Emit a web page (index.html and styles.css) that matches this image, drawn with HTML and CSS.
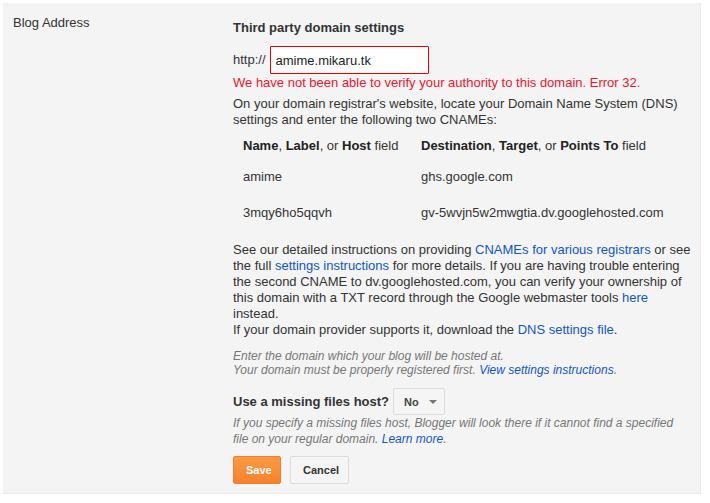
FILE: index.html
```html
<!DOCTYPE html>
<html lang="en">
<head>
  <meta charset="UTF-8" />
  <title>Blog Address</title>
  <link rel="stylesheet" href="styles.css">
</head>
<body>
  <div class="panel">
    <div class="label">Blog Address</div>

    <div class="settings">
      <h3>Third party domain settings</h3>

      <div class="domain-row">
        <span class="prefix">http://</span>
        <input class="domain-input" type="text" value="amime.mikaru.tk" />
      </div>
      <div class="error">We have not been able to verify your authority to this domain. Error 32.</div>

      <p class="text">On your domain registrar's website, locate your Domain Name System (DNS) settings and enter the following two CNAMEs:</p>

      <table class="cnames">
        <tr>
          <th><b>Name</b>, <b>Label</b>, or <b>Host</b> field</th>
          <th><b>Destination</b>, <b>Target</b>, or <b>Points To</b> field</th>
        </tr>
        <tr>
          <td>amime</td>
          <td>ghs.google.com</td>
        </tr>
        <tr>
          <td>3mqy6ho5qqvh</td>
          <td>gv-5wvjn5w2mwgtia.dv.googlehosted.com</td>
        </tr>
      </table>

      <p class="text">See our detailed instructions on providing <a href="#">CNAMEs for various registrars</a> or see the full <a href="#">settings instructions</a> for more details. If you are having trouble entering the second CNAME to dv.googlehosted.com, you can verify your ownership of this domain with a TXT record through the Google webmaster tools <a href="#">here</a> instead.<br />If your domain provider supports it, download the <a href="#">DNS settings file</a>.</p>

      <p class="hint">Enter the domain which your blog will be hosted at.<br />Your domain must be properly registered first. <a href="#">View settings instructions</a>.</p>

      <div class="missing-row">
        <span class="missing-label">Use a missing files host?</span>
        <button class="select">No <span class="caret"></span></button>
      </div>
      <p class="hint hint-missing">If you specify a missing files host, Blogger will look there if it cannot find a specified file on your regular domain. <a href="#">Learn more</a>.</p>

      <div class="actions">
        <button class="btn btn-save">Save</button>
        <button class="btn btn-cancel">Cancel</button>
      </div>
    </div>
  </div>
</body>
</html>
```

FILE: styles.css
```css
* {
  margin: 0;
  padding: 0;
  box-sizing: border-box;
}

body {
  font-family: "Liberation Sans", Arial, sans-serif;
  font-size: 13px;
  line-height: 16px;
  color: #333;
  background: #fff;
  padding: 3px 9px 9px 3px;
}

.panel {
  display: grid;
  grid-template-columns: 220px 464px;
  background: #f4f4f4;
  border-right: 1px solid #ebebeb;
  border-bottom: 1px solid #ebebeb;
  padding: 12px 10px 10px 10px;
  height: 491px;
}

.label {
  color: #333;
}

.settings {
  padding-top: 5px;
}

h3 {
  font-size: 13px;
  font-weight: bold;
  color: #333;
}

.domain-row {
  display: flex;
  align-items: center;
  gap: 4px;
  margin-top: 10px;
}

.domain-input {
  width: 159px;
  height: 28px;
  border: 1px solid #e00;
  border-radius: 1px;
  background: #fff;
  padding: 0 5px;
  font-family: inherit;
  font-size: 13px;
  color: #222;
  outline: none;
}

.error {
  color: #f0142d;
  margin-top: 1px;
}

.text {
  margin-top: 5px;
}

a {
  color: #1155cc;
  text-decoration: none;
}

.cnames {
  border-collapse: collapse;
  margin-top: 2px;
}

.cnames th,
.cnames td {
  text-align: left;
  padding: 10px;
  font-weight: normal;
  white-space: nowrap;
}

.cnames th {
  padding-top: 8px;
  padding-bottom: 5px;
}

.cnames th:first-child,
.cnames td:first-child {
  width: 178px;
}

.cnames th b {
  color: #222;
}

.cnames + .text {
  margin-top: 11px;
}

.hint {
  font-size: 12px;
  line-height: 14px;
  font-style: italic;
  color: #777;
  margin-top: 11px;
}

.hint-missing {
  max-width: 450px;
  line-height: 16px;
  margin-top: 0;
}

.missing-row {
  display: flex;
  align-items: center;
  gap: 4px;
  margin-top: 11px;
}

.missing-label {
  font-weight: bold;
  color: #333;
}

.select {
  display: flex;
  align-items: center;
  gap: 10px;
  height: 27px;
  width: 52px;
  padding: 0 10px;
  font-family: inherit;
  font-size: 11px;
  font-weight: bold;
  color: #444;
  background: #f5f5f5;
  border: 1px solid #dcdcdc;
  border-radius: 2px;
}

.caret {
  width: 0;
  height: 0;
  border-left: 4px solid transparent;
  border-right: 4px solid transparent;
  border-top: 4px solid #777;
}

.actions {
  display: flex;
  gap: 9px;
  margin-top: 9px;
}

.btn {
  height: 28px;
  padding: 0 12px;
  font-family: inherit;
  font-size: 11px;
  font-weight: bold;
  border-radius: 2px;
}

.btn-save {
  width: 48px;
  color: #fff;
  background: linear-gradient(#fb9a44, #f6822c);
  border: 1px solid #f27e2b;
}

.btn-cancel {
  width: 59px;
  color: #333;
  background: #f5f5f5;
  border: 1px solid #dcdcdc;
}
```
